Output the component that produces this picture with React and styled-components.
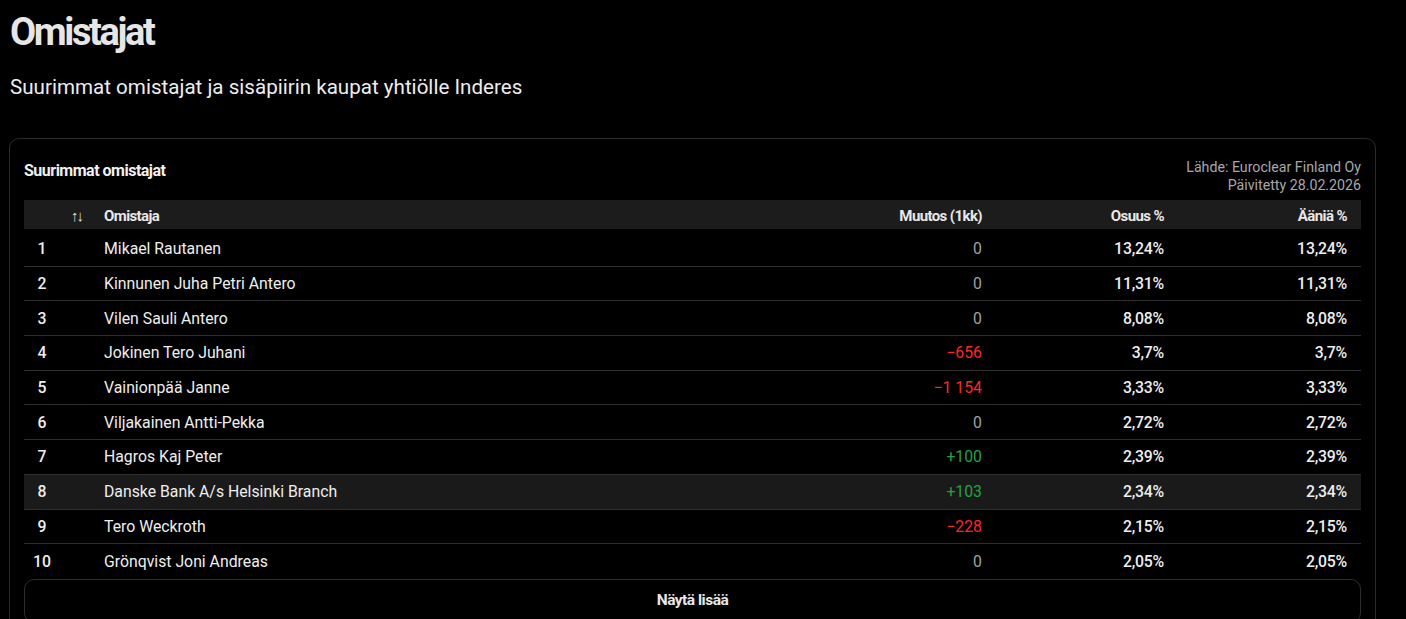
import React from "react";
import styled, { createGlobalStyle } from "styled-components";

const GlobalStyle = createGlobalStyle`
  html, body {
    margin: 0;
    padding: 0;
    background: #000;
    color: #ececec;
    font-family: Roboto, "Liberation Sans", sans-serif;
    overflow: hidden;
  }
`;

const owners = [
  { name: "Mikael Rautanen", change: "0", share: "13,24%", votes: "13,24%" },
  { name: "Kinnunen Juha Petri Antero", change: "0", share: "11,31%", votes: "11,31%" },
  { name: "Vilen Sauli Antero", change: "0", share: "8,08%", votes: "8,08%" },
  { name: "Jokinen Tero Juhani", change: "\u2212656", share: "3,7%", votes: "3,7%" },
  { name: "Vainionpää Janne", change: "\u22121 154", share: "3,33%", votes: "3,33%" },
  { name: "Viljakainen Antti-Pekka", change: "0", share: "2,72%", votes: "2,72%" },
  { name: "Hagros Kaj Peter", change: "+100", share: "2,39%", votes: "2,39%" },
  { name: "Danske Bank A/s Helsinki Branch", change: "+103", share: "2,34%", votes: "2,34%", hover: true },
  { name: "Tero Weckroth", change: "\u2212228", share: "2,15%", votes: "2,15%" },
  { name: "Grönqvist Joni Andreas", change: "0", share: "2,05%", votes: "2,05%" }
];

const Page = styled.div`
  padding: 11px 30px 0 9px;
`;

const Title = styled.h1`
  margin: 0 0 0 1px;
  font-weight: 700;
  font-size: 38px;
  line-height: 42px;
  letter-spacing: -2.4px;
  color: #e6e6e6;
`;

const Subtitle = styled.p`
  margin: 22px 0 0 1px;
  font-size: 20.6px;
  line-height: 24px;
  color: #ededed;
`;

const Card = styled.section`
  margin-top: 39px;
  border: 1px solid #2b2b2b;
  border-radius: 10px;
  padding: 16px 14px 0 14px;
  height: 500px;
`;

const CardHead = styled.div`
  display: flex;
  justify-content: space-between;
  align-items: flex-start;
  margin-bottom: 6px;
`;

const CardTitle = styled.h2`
  margin: 6px 0 0;
  font-weight: 700;
  font-size: 16px;
  letter-spacing: -0.5px;
  color: #f0f0f0;
`;

const Source = styled.div`
  text-align: right;
  font-size: 14.2px;
  line-height: 18px;
  color: #a8a8a8;
  padding-top: 3px;
`;

const Table = styled.table`
  width: 100%;
  border-collapse: collapse;
`;

const HeadCell = styled.th`
  background: #1c1c1c;
  height: 29px;
  box-sizing: border-box;
  padding: 2px ${(p) => (p.$last ? "14px" : "0")} 0 ${(p) => p.$indent || "0"};
  text-align: ${(p) => (p.$right ? "right" : "left")};
  font-weight: 700;
  font-size: 15px;
  letter-spacing: -0.6px;
  color: #e8e8e8;
`;

const Row = styled.tr`
  background: ${(p) => (p.$hover ? "#1a1a1a" : "transparent")};
  border-top: ${(p) => (p.$first ? "none" : "1px solid #2e2e2e")};
`;

const Cell = styled.td`
  height: 33.7px;
  padding: ${(p) => (p.$first ? "3px" : "0")} ${(p) => (p.$last ? "14px" : "0")} 0 0;
  text-align: ${(p) => (p.$right ? "right" : "left")};
  font-size: 15.8px;
  font-weight: ${(p) => (p.$strong ? 500 : 400)};
  letter-spacing: ${(p) => (p.$strong ? "-0.2px" : "0")};
  color: ${(p) => p.$color || "#eeeeee"};
`;

const RankCell = styled(Cell)`
  text-align: center;
  font-weight: 500;
`;

const SortIcon = styled.span`
  display: inline-block;
  font-size: 15px;
  font-weight: 700;
  letter-spacing: -2px;
  color: #e0e0e0;
`;

const MoreButton = styled.button`
  display: block;
  width: 100%;
  height: 44px;
  margin-top: 1px;
  padding-bottom: 2px;
  background: transparent;
  border: 1px solid #2e2e2e;
  border-radius: 10px;
  color: #e8e8e8;
  font-family: Roboto, sans-serif;
  font-weight: 700;
  font-size: 15.5px;
  letter-spacing: -0.5px;
  cursor: pointer;
`;

const changeColor = (v) => {
  if (v.startsWith("+")) return "#24a33d";
  if (v.startsWith("\u2212")) return "#ff2626";
  return "#a0a0a0";
};

export default function App() {
  return (
    <Page>
      <GlobalStyle />
      <Title>Omistajat</Title>
      <Subtitle>Suurimmat omistajat ja sisäpiirin kaupat yhtiölle Inderes</Subtitle>
      <Card>
        <CardHead>
          <CardTitle>Suurimmat omistajat</CardTitle>
          <Source>
            Lähde: Euroclear Finland Oy
            <br />
            Päivitetty 28.02.2026
          </Source>
        </CardHead>
        <Table>
          <colgroup>
            <col style={{ width: 36 }} />
            <col style={{ width: 44 }} />
            <col />
            <col style={{ width: 180 }} />
            <col style={{ width: 182 }} />
            <col style={{ width: 197 }} />
          </colgroup>
          <thead>
            <tr>
              <HeadCell />
              <HeadCell $indent="11px">
                <SortIcon>↑↓</SortIcon>
              </HeadCell>
              <HeadCell>Omistaja</HeadCell>
              <HeadCell $right>Muutos (1kk)</HeadCell>
              <HeadCell $right>Osuus %</HeadCell>
              <HeadCell $right $last>Ääniä %</HeadCell>
            </tr>
          </thead>
          <tbody>
            {owners.map((o, i) => {
              const first = i === 0;
              return (
                <Row key={o.name} $first={first} $hover={o.hover}>
                  <RankCell $first={first}>{i + 1}</RankCell>
                  <Cell $first={first} />
                  <Cell $first={first}>{o.name}</Cell>
                  <Cell $first={first} $right $color={changeColor(o.change)}>
                    {o.change}
                  </Cell>
                  <Cell $first={first} $right $strong>{o.share}</Cell>
                  <Cell $first={first} $right $last $strong>{o.votes}</Cell>
                </Row>
              );
            })}
          </tbody>
        </Table>
        <MoreButton>Näytä lisää</MoreButton>
      </Card>
    </Page>
  );
}
